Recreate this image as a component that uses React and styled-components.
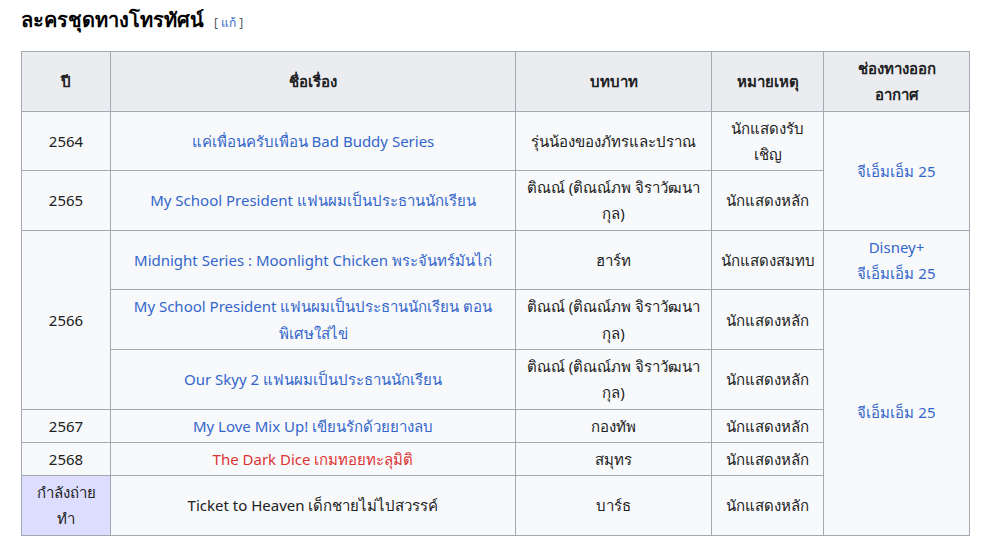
import React from 'react'
import styled, {createGlobalStyle} from 'styled-components'

const Global = createGlobalStyle`
  body {
    margin: 0;
    background: #fff;
    font-family: "Noto Sans", "DejaVu Sans", sans-serif;
    color: #202122;
  }
`

const Page = styled.div`
  padding: 4px 21px 0 21px;
`

const Heading = styled.h3`
  margin: 0 0 12px 0;
  display: flex;
  align-items: baseline;
  gap: 10px;
  font-size: 20px;
  font-weight: bold;
  line-height: 32px;
  color: #000;
`

const EditLink = styled.span`
  font-size: 12px;
  font-weight: normal;
  color: #54595d;
  white-space: pre;
  a {
    color: #3366cc;
    text-decoration: none;
  }
`

const Table = styled.table`
  border-collapse: collapse;
  table-layout: fixed;
  width: 948px;
  background: #f8f9fa;
  border: 1px solid #a2a9b1;
  font-size: 15px;
  line-height: 26.3px;
`

const Th = styled.th`
  background: #eaecf0;
  border: 1px solid #a2a9b1;
  padding: 3px 6px;
  text-align: center;
  font-weight: bold;
`

const Td = styled.td`
  border: 1px solid #a2a9b1;
  padding: 3px 6px;
  text-align: center;
  background: ${p => (p.$filming ? '#ddddff' : 'transparent')};
`

const Link = styled.a`
  color: ${p => (p.$missing ? '#d33' : '#3366cc')};
  text-decoration: none;
`

const rows = [
  {year: '2564', title: 'แค่เพื่อนครับเพื่อน Bad Buddy Series', role: 'รุ่นน้องของภัทรและปราณ', note: 'นักแสดงรับเชิญ', channel: ['จีเอ็มเอ็ม 25'], channelSpan: 2},
  {year: '2565', title: 'My School President แฟนผมเป็นประธานนักเรียน', role: 'ติณณ์ (ติณณ์ภพ จิราวัฒนากุล)', note: 'นักแสดงหลัก'},
  {year: '2566', yearSpan: 3, title: 'Midnight Series : Moonlight Chicken พระจันทร์มันไก่', role: 'ฮาร์ท', note: 'นักแสดงสมทบ', channel: ['Disney+', 'จีเอ็มเอ็ม 25'], channelSpan: 1},
  {title: 'My School President แฟนผมเป็นประธานนักเรียน ตอนพิเศษใส่ไข่', role: 'ติณณ์ (ติณณ์ภพ จิราวัฒนากุล)', note: 'นักแสดงหลัก', channel: ['จีเอ็มเอ็ม 25'], channelSpan: 5},
  {title: 'Our Skyy 2 แฟนผมเป็นประธานนักเรียน', role: 'ติณณ์ (ติณณ์ภพ จิราวัฒนากุล)', note: 'นักแสดงหลัก'},
  {year: '2567', title: 'My Love Mix Up! เขียนรักด้วยยางลบ', role: 'กองทัพ', note: 'นักแสดงหลัก'},
  {year: '2568', title: 'The Dark Dice เกมทอยทะลุมิติ', missing: true, role: 'สมุทร', note: 'นักแสดงหลัก'},
  {year: 'กำลังถ่ายทำ', filming: true, title: 'Ticket to Heaven เด็กชายไม่ไปสวรรค์', plain: true, role: 'บาร์ธ', note: 'นักแสดงหลัก'},
]

const App = () =>
  <Page>
    <Global />
    <Heading>
      ละครชุดทางโทรทัศน์
      <EditLink>[ <a href="#">แก้</a> ]</EditLink>
    </Heading>
    <Table>
      <colgroup>
        <col style={{width: 89}} />
        <col style={{width: 405}} />
        <col style={{width: 196}} />
        <col style={{width: 112}} />
        <col style={{width: 146}} />
      </colgroup>
      <thead>
        <tr>
          <Th>ปี</Th>
          <Th>ชื่อเรื่อง</Th>
          <Th>บทบาท</Th>
          <Th>หมายเหตุ</Th>
          <Th>ช่องทางออก<br />อากาศ</Th>
        </tr>
      </thead>
      <tbody>
        {rows.map((r, i) =>
          <tr key={i}>
            {r.year &&
              <Td rowSpan={r.yearSpan || 1} $filming={r.filming}>{r.year}</Td>}
            <Td>
              {r.plain ? r.title : <Link href="#" $missing={r.missing}>{r.title}</Link>}
            </Td>
            <Td>{r.role}</Td>
            <Td>{r.note}</Td>
            {r.channel &&
              <Td rowSpan={r.channelSpan}>
                {r.channel.map((c, j) =>
                  <React.Fragment key={j}>
                    {j > 0 && <br />}
                    <Link href="#">{c}</Link>
                  </React.Fragment>
                )}
              </Td>}
          </tr>
        )}
      </tbody>
    </Table>
  </Page>

export default App
